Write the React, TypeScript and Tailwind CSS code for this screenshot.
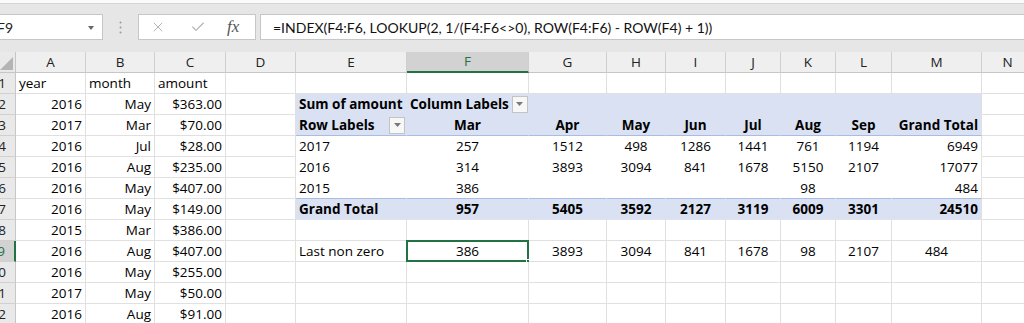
import { X, Check } from 'lucide-react';
import clsx from 'clsx';

type Kind = 'grid' | 'ph' | 'phl' | 'pd' | 'pdl' | 'pt';

type CellDef = {
    t?: string;
    a?: 'l' | 'c' | 'r';
    b?: boolean;
    drop?: boolean;
    sel?: boolean;
};

// columns A..N (row header is separate)
const colLetters = ['A', 'B', 'C', 'D', 'E', 'F', 'G', 'H', 'I', 'J', 'K', 'L', 'M', 'N'];

const sheetData: [string, string, string][] = [
    ['2016', 'May', '$363.00'],
    ['2017', 'Mar', '$70.00'],
    ['2016', 'Jul', '$28.00'],
    ['2016', 'Aug', '$235.00'],
    ['2016', 'May', '$407.00'],
    ['2016', 'May', '$149.00'],
    ['2015', 'Mar', '$386.00'],
    ['2016', 'Aug', '$407.00'],
    ['2016', 'May', '$255.00'],
    ['2017', 'May', '$50.00'],
    ['2016', 'Aug', '$91.00'],
];

const c = (t: string, a: 'l' | 'c' | 'r' = 'c', b = false): CellDef => ({ t, a, b });

// Pivot + extra cells from column E to M, keyed by row number
const pivot: Record<number, { kind: Kind; cells: CellDef[] }> = {
    2: {
        kind: 'ph',
        cells: [c('Sum of amount', 'l', true), { t: 'Column Labels', a: 'l', b: true, drop: true }, {}, {}, {}, {}, {}, {}, {}],
    },
    3: {
        kind: 'phl',
        cells: [
            { t: 'Row Labels', a: 'l', b: true, drop: true },
            c('Mar', 'c', true), c('Apr', 'c', true), c('May', 'c', true), c('Jun', 'c', true),
            c('Jul', 'c', true), c('Aug', 'c', true), c('Sep', 'c', true), c('Grand Total', 'r', true),
        ],
    },
    4: {
        kind: 'pd',
        cells: [c('2017', 'l'), c('257'), c('1512'), c('498'), c('1286'), c('1441'), c('761'), c('1194'), c('6949', 'r')],
    },
    5: {
        kind: 'pd',
        cells: [c('2016', 'l'), c('314'), c('3893'), c('3094'), c('841'), c('1678'), c('5150'), c('2107'), c('17077', 'r')],
    },
    6: {
        kind: 'pdl',
        cells: [c('2015', 'l'), c('386'), {}, {}, {}, {}, c('98'), {}, c('484', 'r')],
    },
    7: {
        kind: 'pt',
        cells: [
            c('Grand Total', 'l', true), c('957', 'c', true), c('5405', 'c', true), c('3592', 'c', true), c('2127', 'c', true),
            c('3119', 'c', true), c('6009', 'c', true), c('3301', 'c', true), c('24510', 'r', true),
        ],
    },
    9: {
        kind: 'grid',
        cells: [c('Last non zero', 'l'), { t: '386', a: 'c', sel: true }, c('3893'), c('3094'), c('841'), c('1678'), c('98'), c('2107'), c('484')],
    },
};

const kindBg: Record<Kind, string> = {
    grid: 'bg-white',
    ph: 'bg-[#d9e1f2]',
    phl: 'bg-[#d9e1f2]',
    pd: 'bg-white',
    pdl: 'bg-white',
    pt: 'bg-[#d9e1f2]',
};

const kindBottom: Record<Kind, string> = {
    grid: 'border-b-[#e0e0e0]',
    ph: 'border-b-[#d9e1f2]',
    phl: 'border-b-[#a9bde3]',
    pd: 'border-b-white',
    pdl: 'border-b-[#a9bde3]',
    pt: 'border-b-[#dfe3ec]',
};

const kindRight: Record<Kind, string> = {
    grid: 'border-r-[#e0e0e0]',
    ph: 'border-r-[#d9e1f2]',
    phl: 'border-r-[#d9e1f2]',
    pd: 'border-r-white',
    pdl: 'border-r-white',
    pt: 'border-r-[#d9e1f2]',
};

function DropButton() {
    return (
        <span className="flex h-[17px] w-[16px] shrink-0 items-center justify-center border border-[#c3c3c3] bg-[#f7f7f7]">
            <svg width="7" height="4" viewBox="0 0 7 4">
                <path d="M0 0h7L3.5 4z" fill="#7a7a7a" />
            </svg>
        </span>
    );
}

function SheetCell({ cell, kind, isLastPivotCol }: { cell: CellDef; kind: Kind; isLastPivotCol?: boolean }) {
    return (
        <div
            className={clsx(
                'relative flex h-[21px] items-center border-r border-b px-[3px] whitespace-nowrap',
                kindBg[kind],
                kindBottom[kind],
                isLastPivotCol ? 'border-r-[#e0e0e0]' : kindRight[kind],
                cell.a === 'l' && 'justify-start',
                cell.a === 'c' && 'justify-center',
                cell.a === 'r' && 'justify-end',
                cell.b && 'font-bold'
            )}
        >
            <span>{cell.t}</span>
            {cell.drop && (
                <span className="ml-auto mr-[-2px] pl-[3px]">
                    <DropButton />
                </span>
            )}
            {cell.sel && (
                <>
                    <span className="pointer-events-none absolute -top-[1px] -left-[1px] -right-[1px] -bottom-[1px] border-2 border-[#217346]" />
                    <span className="absolute -right-[4px] -bottom-[4px] h-[6px] w-[6px] border border-white bg-[#217346]" />
                </>
            )}
        </div>
    );
}

function RowHeader({ n, active }: { n: number; active?: boolean }) {
    return (
        <div
            className={clsx(
                'flex h-[21px] items-center justify-end overflow-hidden border-b border-[#d0d0d0] pr-[9px]',
                active ? 'border-r-2 border-r-[#217346] bg-[#d2d2d2] text-[#217346]' : 'border-r border-r-[#c6c6c6] bg-[#e9e9e9] text-[#222]'
            )}
        >
            <span>{n}</span>
        </div>
    );
}

export default function App() {
    const rows = Array.from({ length: 12 }, (_, i) => i + 1);

    return (
        <div className="h-[323px] w-[1024px] overflow-hidden bg-[#e6e6e6] font-['Open_Sans',sans-serif] text-[13.5px] text-black">
            {/* ribbon remnant */}
            <div className="h-[4px] border-b border-[#d4d4d4] bg-[#fafafa]" />

            {/* Formula bar */}
            <div className="flex h-[48px] items-start pt-[10px] font-['Lato',sans-serif]">
                <div className="relative flex h-[26px] w-[103px] items-center border-y border-r border-[#c6c6c6] bg-white">
                    <span className="ml-[-3px] text-[14px] text-[#222]">F9</span>
                    <svg className="absolute right-[8px] top-[11px]" width="6" height="4" viewBox="0 0 6 4">
                        <path d="M0 0h6L3 4z" fill="#666" />
                    </svg>
                </div>
                <div className="flex h-[26px] w-[35px] items-center justify-center">
                    <svg width="3" height="13" viewBox="0 0 3 13">
                        <circle cx="1.5" cy="1.5" r="1" fill="#9a9a9a" />
                        <circle cx="1.5" cy="6.5" r="1" fill="#9a9a9a" />
                        <circle cx="1.5" cy="11.5" r="1" fill="#9a9a9a" />
                    </svg>
                </div>
                <div className="flex h-[26px] w-[118px] items-center border border-[#c6c6c6] bg-white">
                    <span className="ml-[10px] flex w-[18px] justify-center">
                        <X className="h-[16px] w-[16px] text-[#b0b0b0]" strokeWidth={1.4} />
                    </span>
                    <span className="ml-[22px] flex w-[18px] justify-center">
                        <Check className="h-[16px] w-[16px] text-[#b0b0b0]" strokeWidth={1.6} />
                    </span>
                    <span className="ml-[20px] font-['Liberation_Serif',serif] text-[17px] italic text-[#555]">fx</span>
                </div>
                <div className="ml-[4px] flex h-[26px] flex-1 items-center border-y border-l border-[#c6c6c6] bg-white pl-[12px] text-[14px] whitespace-nowrap text-[#111]">
                    =INDEX(F4:F6, LOOKUP(2, 1/(F4:F6&lt;&gt;0), ROW(F4:F6) - ROW(F4) + 1))
                </div>
            </div>

            {/* Sheet grid */}
            <div className="grid grid-cols-[16px_70px_69px_71px_70px_111px_122px_78px_59px_60px_55px_55px_56px_90px_52px] bg-white">
                {/* column headers */}
                <div className="relative h-[21px] border-r border-b border-[#c6c6c6] bg-[#e9e9e9]">
                    <svg className="absolute left-0 top-[5px]" width="13" height="13" viewBox="0 0 13 13">
                        <path d="M13 0V13H0z" fill="#b4b4b4" />
                    </svg>
                </div>
                {colLetters.map((l) => (
                    <div
                        key={l}
                        className={clsx(
                            'flex h-[21px] items-center justify-center border-r border-r-[#cfcfcf]',
                            l === 'F'
                                ? 'border-b-2 border-b-[#217346] bg-[#d2d2d2] text-[#217346]'
                                : 'border-b border-b-[#c6c6c6] bg-[#efefef] text-[#222]'
                        )}
                    >
                        {l}
                    </div>
                ))}

                {rows.map((r) => {
                    const p = pivot[r];
                    const left: CellDef[] =
                        r === 1
                            ? [c('year', 'l'), c('month', 'l'), c('amount', 'l'), {}]
                            : [c(sheetData[r - 2][0], 'r'), c(sheetData[r - 2][1], 'r'), c(sheetData[r - 2][2], 'r'), {}];
                    const mid: CellDef[] = p ? p.cells : Array.from({ length: 9 }, () => ({}));
                    const kind: Kind = p ? p.kind : 'grid';
                    return (
                        <div key={r} className="contents">
                            <RowHeader n={r} active={r === 9} />
                            {left.map((cell, i) => (
                                <SheetCell key={`l${i}`} cell={cell} kind="grid" />
                            ))}
                            {mid.map((cell, i) => (
                                <SheetCell key={`m${i}`} cell={cell} kind={kind} isLastPivotCol={i === 8} />
                            ))}
                            <SheetCell cell={{}} kind="grid" />
                        </div>
                    );
                })}
            </div>
        </div>
    );
}
